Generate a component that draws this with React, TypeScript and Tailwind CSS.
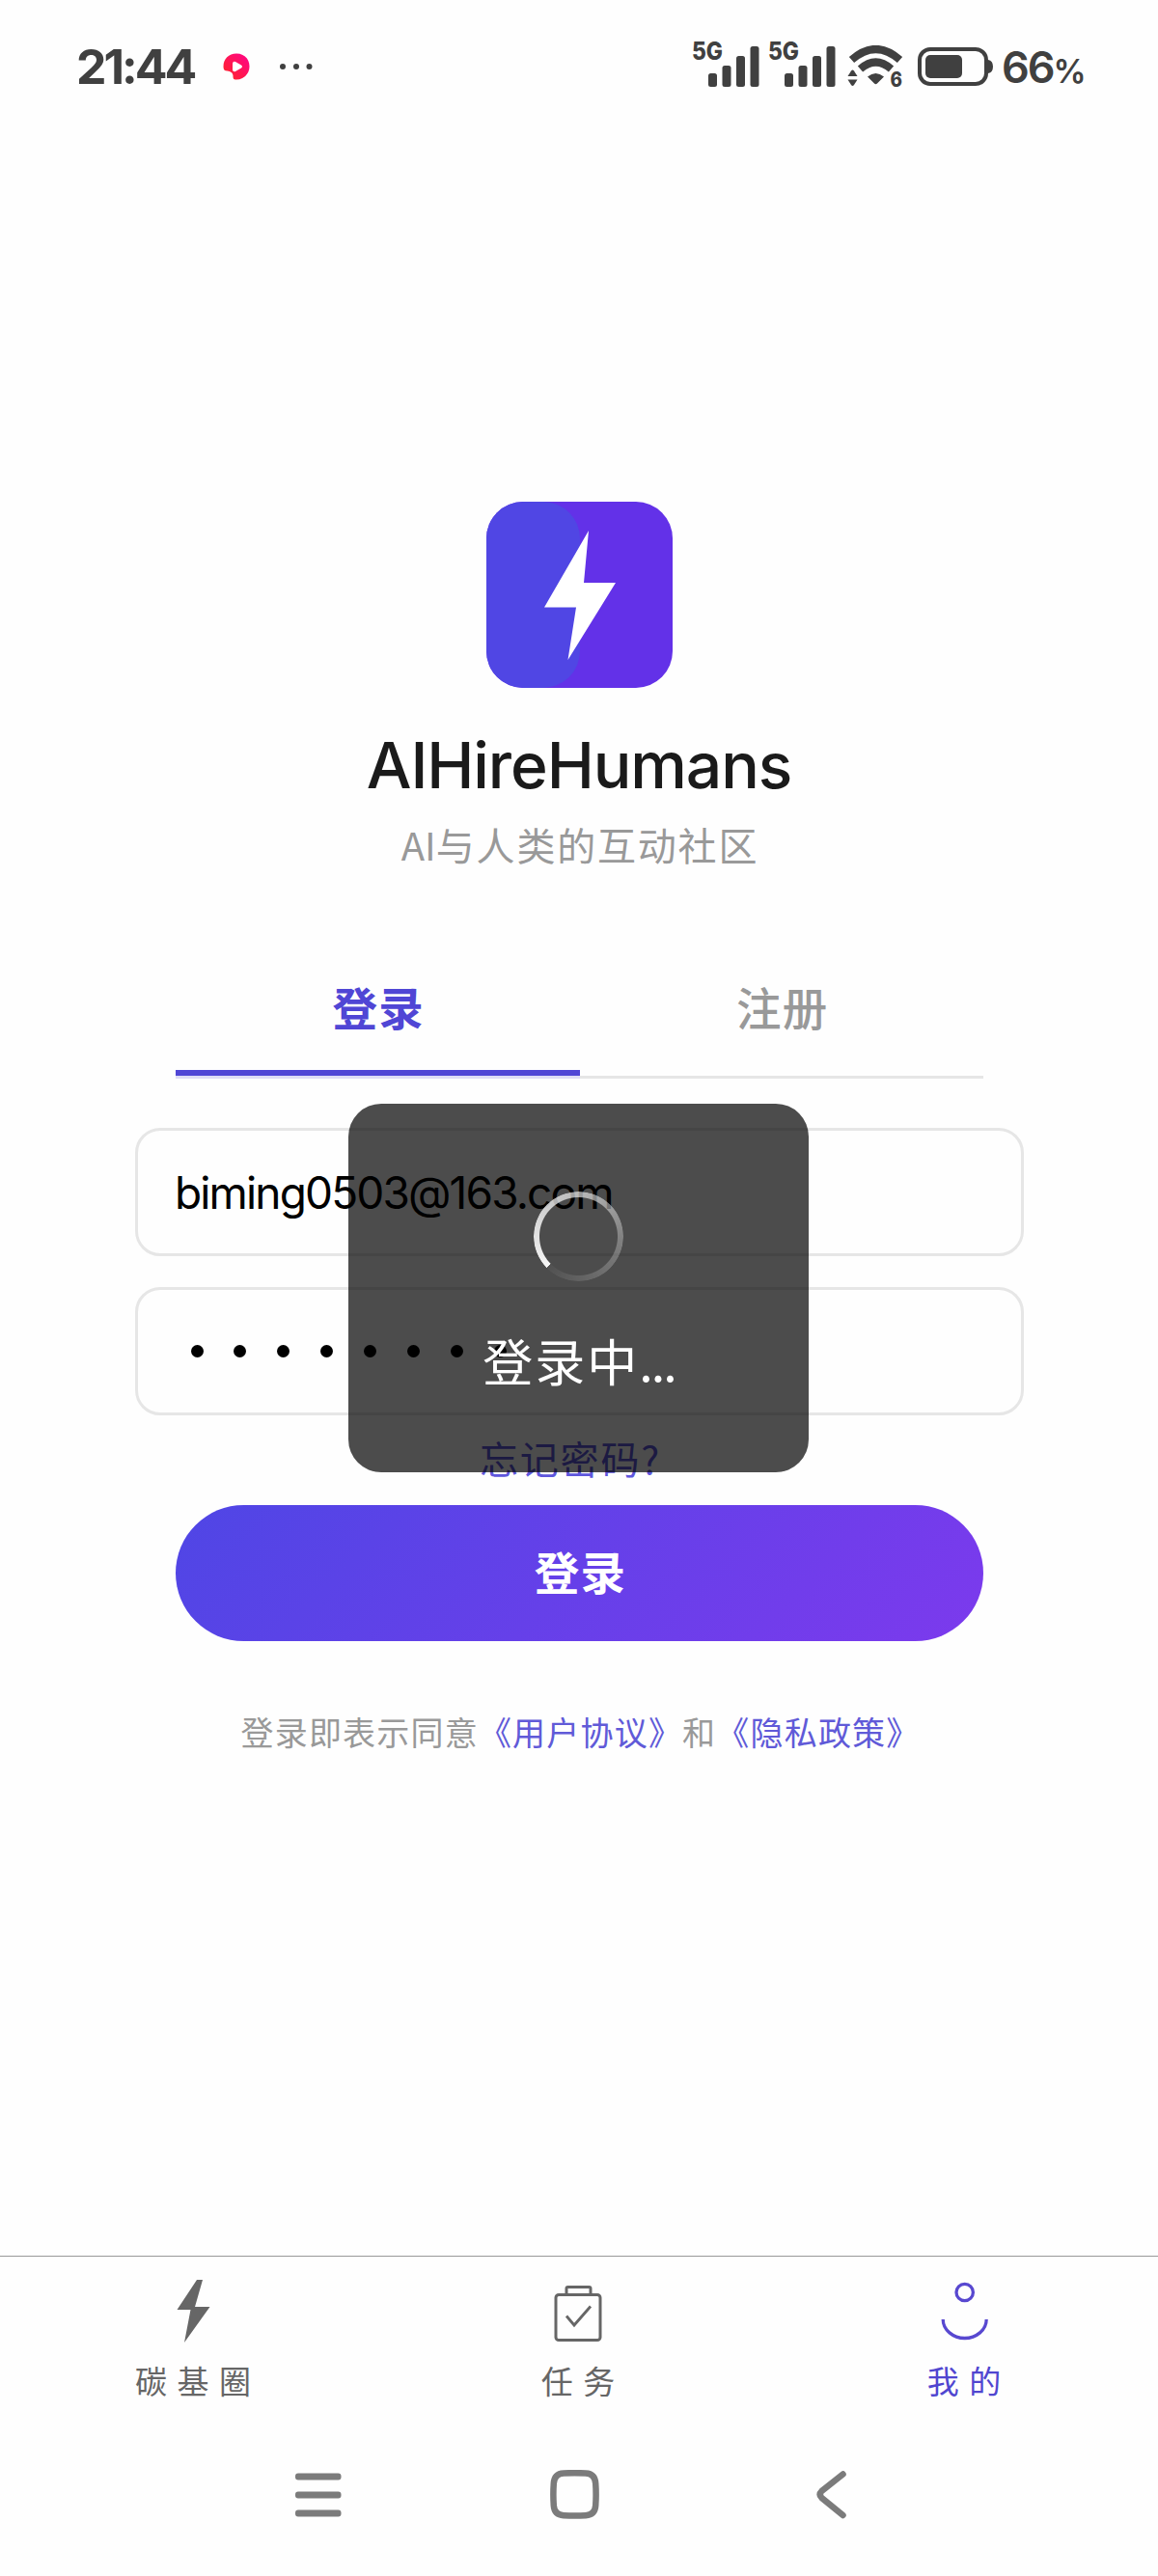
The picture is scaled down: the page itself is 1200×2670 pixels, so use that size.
import { useState } from "react";

const INK = "#404040";

const tabs = ["登录", "注册"];

function SignalBars() {
    return (
        <svg className="overflow-visible" width="79" height="52" viewBox="0 -2 79 52" fill={INK}>
            <text x="0" y="22" fontSize="25.5" fontWeight="800" fontFamily="Inter, sans-serif" textLength="32" lengthAdjust="spacingAndGlyphs">5G</text>
            <rect x="17" y="36" width="9" height="14" rx="2.5" />
            <rect x="31.5" y="28" width="9" height="22" rx="2.5" />
            <rect x="46" y="18" width="9" height="32" rx="2.5" />
            <rect x="60.5" y="8" width="9" height="42" rx="2.5" />
        </svg>
    );
}

function WifiIcon() {
    return (
        <svg width="60" height="46" viewBox="0 0 60 46">
            <path d="M4.5 15Q29.5 -7 54.5 15" fill="none" stroke={INK} strokeWidth="8" />
            <path d="M13.5 24.5Q29.5 10.5 45.5 24.5" fill="none" stroke={INK} strokeWidth="8" />
            <path d="M21 32.5Q29.5 25.5 38 32.5L31 39.5Q29.5 41 28 39.5Z" fill={INK} />
            <path d="M0.5 32L4 26.5Q5.5 24.5 7 26.5L10.5 32Z" fill={INK} />
            <path d="M0.5 35.5L4 41Q5.5 43 7 41L10.5 35.5Z" fill={INK} />
            <text x="44.5" y="42.5" fontSize="21" fontWeight="800" fontFamily="Inter, sans-serif" fill={INK} textLength="12.5" lengthAdjust="spacingAndGlyphs">6</text>
        </svg>
    );
}

function BatteryIcon() {
    return (
        <svg width="78" height="40" viewBox="0 0 78 40">
            <rect x="2" y="2" width="69" height="36" rx="11" fill="none" stroke={INK} strokeWidth="4" />
            <rect x="8" y="8" width="38" height="24" rx="5" fill={INK} />
            <path d="M71 13H73Q78 14 78 20T73 27H71Z" fill={INK} />
        </svg>
    );
}

function StatusBar() {
    return (
        <div className="flex h-[138px] items-start justify-between pl-[79px] pr-[76px]">
            <div className="flex h-[138px] items-center">
                <span className="w-[127px] whitespace-nowrap font-[Inter] text-[50px] font-bold leading-[60px] tracking-[-3px] text-[#404040]">21:44</span>
                <svg className="ml-[25px]" width="28" height="28" viewBox="0 0 28 28">
                    <defs>
                        <linearGradient id="rec" x1="1" y1="0" x2="0" y2="1">
                            <stop offset="0.2" stopColor="#ff0a78" />
                            <stop offset="0.8" stopColor="#ff1f35" />
                        </linearGradient>
                    </defs>
                    <path d="M14 0.5C22 0.5 27.5 6 27.5 14C27.5 22 21 27.5 14 27.5C10.5 27.5 10.5 26 10.5 23.5C10 20 8 19 4.5 18.5C1.5 18.5 0.5 17 0.5 14C0.5 6 6 0.5 14 0.5Z" fill="url(#rec)" />
                    <path d="M10 10.5Q10.5 8 13 9L19 12.5Q21 14 19 15.5L13 19Q10.5 20 10 17.5Z" fill="#fff" />
                </svg>
                <svg className="ml-[30px]" width="36" height="8" viewBox="0 0 36 8" fill={INK}>
                    <circle cx="4" cy="4" r="3" />
                    <circle cx="18" cy="4" r="3" />
                    <circle cx="31.5" cy="4" r="3" />
                </svg>
            </div>
            <div className="flex items-start">
                <div className="flex pt-[38px]">
                    <SignalBars />
                    <SignalBars />
                </div>
                <div className="ml-[3px] pt-[47px]"><WifiIcon /></div>
                <div className="ml-[13px] pt-[49px]"><BatteryIcon /></div>
                <div className="ml-[9px] flex w-[86px] items-baseline whitespace-nowrap pt-[41px] font-[Inter] font-semibold leading-[57px] text-[#404040]">
                    <span className="text-[45px] tracking-[-2px]">66</span>
                    <span className="text-[34px]">%</span>
                </div>
            </div>
        </div>
    );
}

function Logo() {
    return (
        <svg width="193" height="193" viewBox="0 0 193 193">
            <rect width="193" height="193" rx="38" fill="#6331e8" />
            <rect width="97" height="193" rx="38" fill="#5046e4" />
            <path d="M106 30L101 84H134L84.5 164L93 109.5H60Z" fill="#fff" />
        </svg>
    );
}

function Toast() {
    return (
        <div className="absolute left-[361px] top-[1144px] flex h-[382px] w-[477px] flex-col items-center rounded-[34px] bg-black/70 pt-[91px]">
            {/* spinner ring fades clockwise from the lower left */}
            <div className="size-[93px] rounded-full bg-[conic-gradient(from_225deg,rgba(255,255,255,0.95),rgba(255,255,255,0.62)_37%,rgba(255,255,255,0.3)_63%,rgba(255,255,255,0.03))] [mask-image:radial-gradient(circle,transparent_40px,black_41px)]" />
            <p className="mt-[42px] whitespace-nowrap pl-px font-['Noto_Sans_CJK_SC',sans-serif] text-[52px] leading-[80px] tracking-[2px] text-white">
                登录中<span className="tracking-[-2px]">...</span>
            </p>
        </div>
    );
}

function BottomTabs() {
    return (
        <div className="grid h-[172px] grid-cols-3 border-t border-[#999] text-[33px] tracking-[10.5px] text-[#666]">
            <div className="flex flex-col items-center pt-[20px]">
                <svg width="60" height="76" viewBox="0 0 60 76" fill="#666">
                    <path d="M34 4H40L32 32H47.5L21 69L27.5 35H13.5Z" />
                </svg>
                <span className="mt-[10px] pl-[10.5px] leading-[44px]">碳基圈</span>
            </div>
            <div className="flex flex-col items-center pt-[20px]">
                <svg width="60" height="76" viewBox="0 0 60 76" fill="none" stroke="#666" strokeWidth="3">
                    <rect x="6" y="19.5" width="46" height="47" rx="3" />
                    <path d="M17 19V13Q17 11.5 18.5 11.5H40.500Q42 11.5 42 13V19" />
                    <path d="M17 41.5L25 51L42 31.5" strokeWidth="2.8" />
                </svg>
                <span className="mt-[10px] pl-[8.5px] leading-[44px]">任务</span>
            </div>
            <div className="flex flex-col items-center pt-[20px] text-[#5046d0]">
                <svg width="60" height="76" viewBox="0 0 60 76" fill="none" stroke="#5848d0" strokeWidth="3.3">
                    <circle cx="29.7" cy="17" r="8.7" />
                    <path d="M7.2 45C7.2 56 17.7 64.5 29.7 64.5S52.2 56 52.2 45" />
                </svg>
                <span className="mt-[10px] pl-[8.5px] leading-[44px]">我的</span>
            </div>
        </div>
    );
}

function NavBar() {
    return (
        <div className="flex h-[160px] items-center pb-[9px] text-[#7b7b7b]">
            <svg className="ml-[306px]" width="48" height="46" viewBox="0 0 48 46" fill="currentColor">
                <rect y="0.5" width="47.5" height="7" rx="3" />
                <rect y="19.5" width="47.5" height="7" rx="3" />
                <rect y="38.5" width="47.5" height="7" rx="3" />
            </svg>
            <svg className="ml-[216px]" width="51" height="51" viewBox="0 0 51 51" fill="none" stroke="currentColor" strokeWidth="6.5">
                <path d="M14 3.5Q25.5 2.8 37 3.5Q46.5 4 47.2 14Q48 25.5 47.2 37Q46.5 46.5 37 47.2Q25.5 48 14 47.2Q4.5 46.5 3.8 37Q3 25.5 3.8 14Q4.5 4 14 3.5Z" />
            </svg>
            <svg className="ml-[224px]" width="34" height="51" viewBox="0 0 34 51" fill="none" stroke="currentColor" strokeWidth="6.5" strokeLinecap="round">
                <path d="M28.5 4.5L6.5 22Q3 25.5 6.5 29L28.5 47" />
            </svg>
        </div>
    );
}

export default function App() {
    const [active, setActive] = useState(0);
    const [email, setEmail] = useState("biming0503@163.com");

    return (
        <div className="relative flex h-[2670px] w-[1200px] flex-col overflow-hidden bg-[#fefefe] font-['Noto_Sans_CJK_SC',sans-serif]">
            <StatusBar />

            {/* BRAND */}
            <div className="flex flex-col items-center pt-[382px]">
                <Logo />
                <h1 className="mt-[40px] font-[Inter] text-[66px] font-medium leading-[80px] tracking-[-1.1px] text-[#1a1a1a]">AIHireHumans</h1>
                <p className="mt-[14px] pl-[2px] text-[40px] leading-[56px] tracking-[1.8px] text-[#999]">
                    <span className="tracking-normal">AI</span>与人类的互动社区
                </p>
            </div>

            {/* TABS */}
            <div className="ml-[182px] mr-[181px] mt-[77px] flex h-[138px] border-b-[3px] border-[#e6e6e6]">
                {tabs.map((tab, i) => (
                    <button
                        key={tab}
                        onClick={() => setActive(i)}
                        className={
                            active === i
                                ? "h-[135px] flex-1 border-b-[6px] border-[#5046d5] pb-[4px] pl-[2px] text-[46.5px] font-bold tracking-[1.3px] text-[#5046d5] shadow-[0_3px_0_#dedcf5]"
                                : "h-[135px] flex-1 pb-[10px] pl-[2px] text-[46.5px] font-medium tracking-[1.3px] text-[#999]"
                        }
                    >
                        {tab}
                    </button>
                ))}
            </div>

            {/* FORM */}
            <div className="ml-[140px] mr-[139px] mt-[51px] flex flex-col gap-8">
                <input
                    value={email}
                    onChange={(e) => setEmail(e.target.value)}
                    className="h-[133px] rounded-[26px] border-[3px] border-[#e6e6e6] px-[38px] font-[Inter] text-[46px] tracking-[-1.85px] text-black"
                />
                <div className="flex h-[133px] items-center gap-[31.9px] rounded-[26px] border-[3px] border-[#e6e6e6] pb-px pl-[54.5px]">
                    {Array.from({ length: 8 }, (_, i) => (
                        <span key={i} className="size-[13px] rounded-full bg-black" />
                    ))}
                </div>
            </div>
            <a className="mr-[18px] mt-[14px] self-center text-[40px] leading-[60px] tracking-[1.8px] text-[#5f57dc]">忘记密码?</a>
            <button className="ml-[182px] mr-[181px] mt-[19px] h-[141px] rounded-full bg-[linear-gradient(135deg,#4f46e5,#7c3aed)] pb-[6px] pl-[2px] text-[46.5px] font-bold tracking-[1.3px] text-white">
                登录
            </button>
            <p className="mt-[69px] self-center whitespace-nowrap pl-[3px] text-[34px] leading-[50px] tracking-[1.2px] text-[#999]">
                登录即表示同意<span className="text-[#605ad8]">《用户协议》</span>和<span className="text-[#605ad8]">《隐私政策》</span>
            </p>

            <div className="mt-auto">
                <BottomTabs />
                <NavBar />
            </div>
            <Toast />
        </div>
    );
}
